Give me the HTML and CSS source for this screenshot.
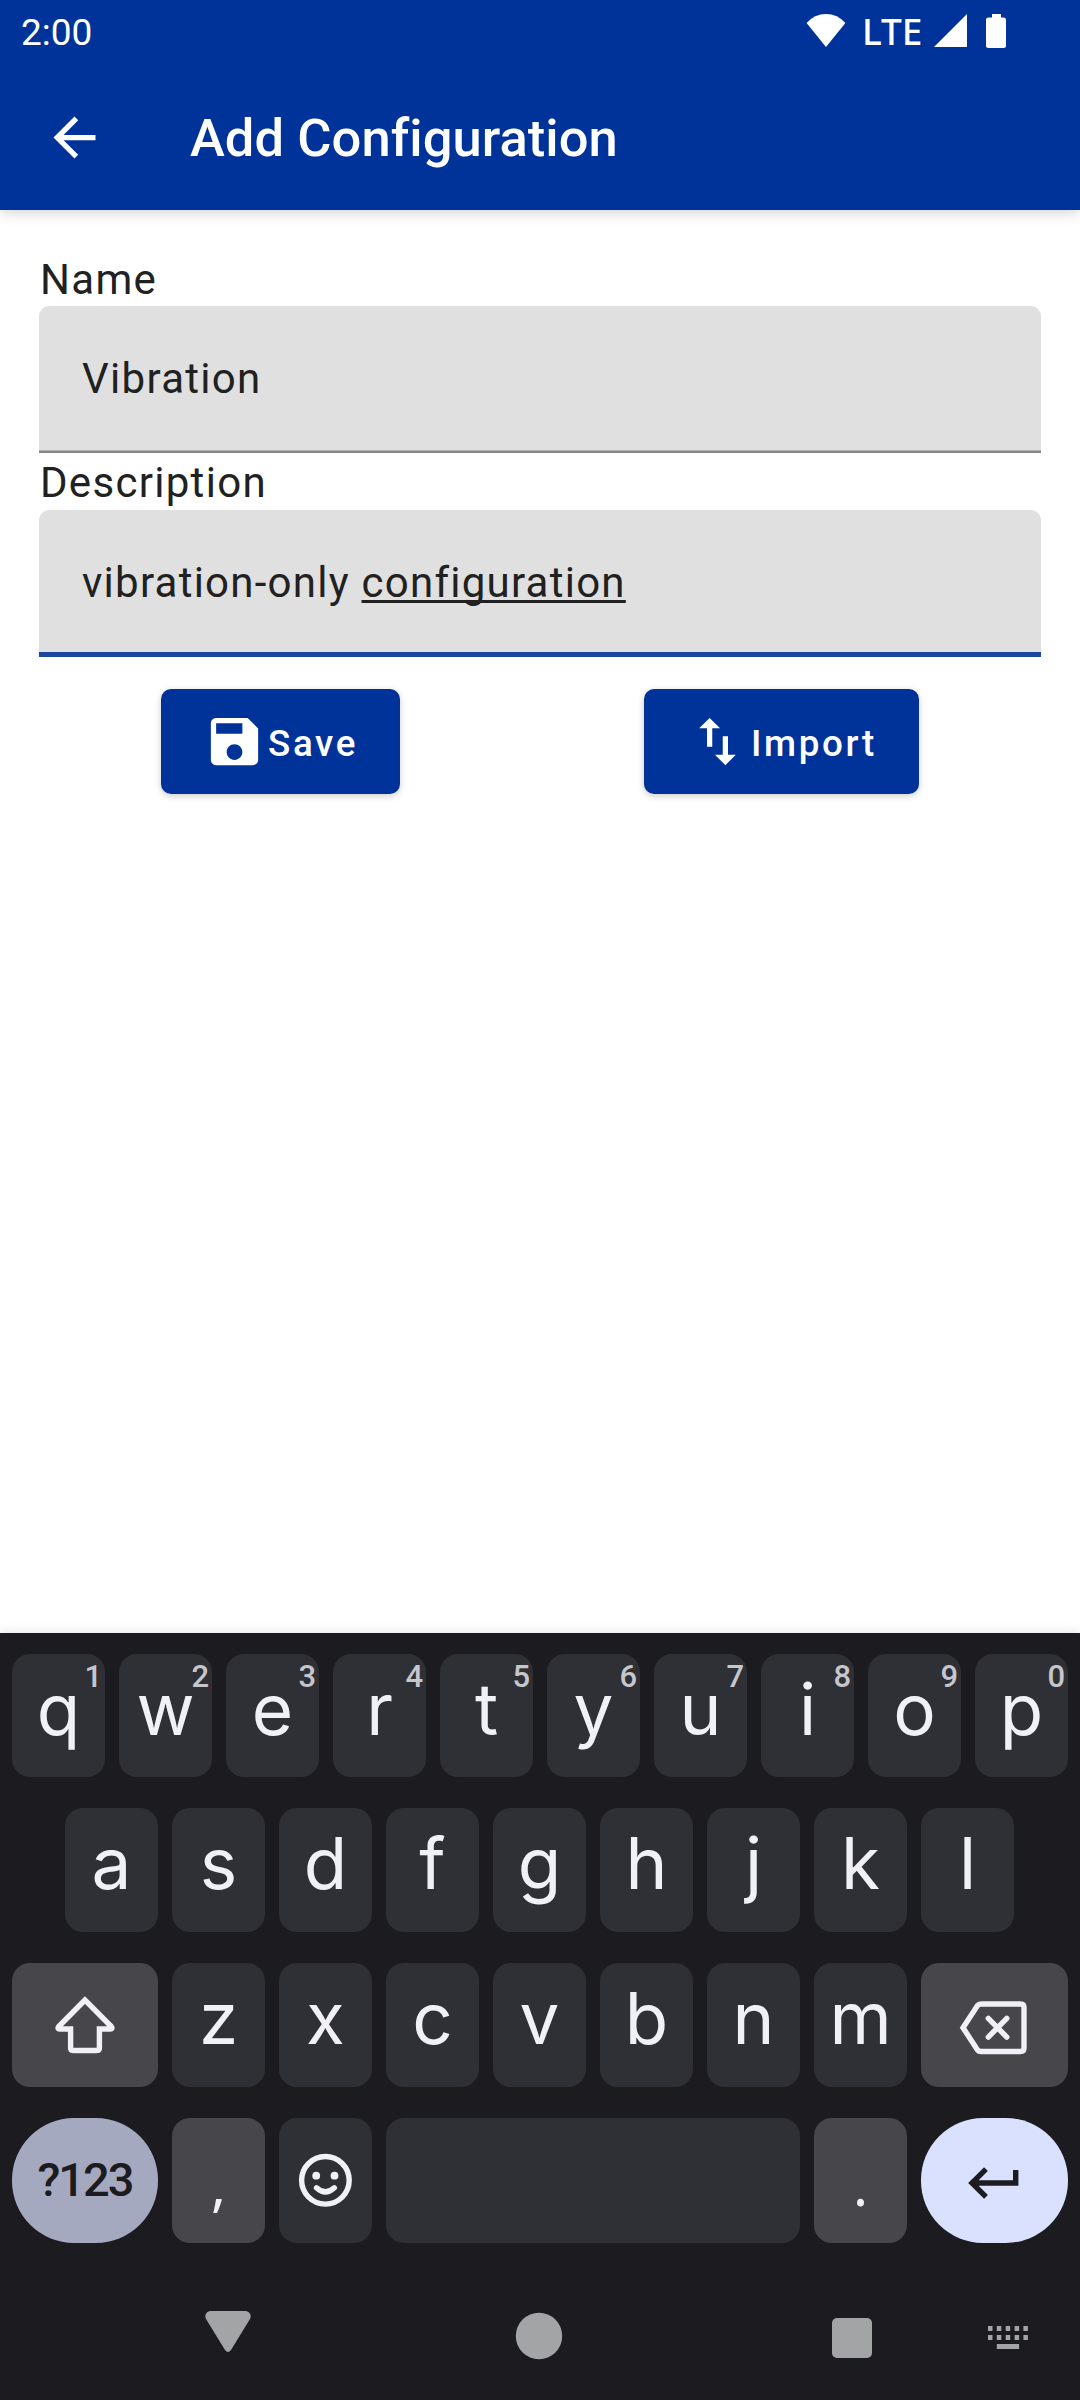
FILE: index.html
```html
<!DOCTYPE html>
<html lang="en">
<head>
<meta charset="utf-8">
<title>Add Configuration</title>
<link rel="stylesheet" href="styles.css">
</head>
<body>
<div class="screen">
  <header class="top">
    <div class="status">
      <span class="clock">2:00</span>
      <div class="indicators">
        <svg class="wifi" width="40" height="33" viewBox="0 0 40 33"><path d="M20 33 .6 9Q8.500 0 20 0T39.400 9z"/></svg>
        <span class="network">LTE</span>
        <svg class="signal" width="33" height="33" viewBox="0 0 33 33"><path d="M0 33H33V0z"/></svg>
        <svg class="battery" width="20" height="34" viewBox="0 0 20 34"><path d="M6 0h9v3.500h2.500q2.500 0 2.500 2.500v25.500q0 2.500-2.500 2.500h-15q-2.500 0-2.500-2.500v-25.500q0-2.500 2.500-2.500H6z"/></svg>
      </div>
    </div>
    <div class="appbar">
      <svg class="back" width="63" height="63" viewBox="0 0 24 24"><path d="M20 11H7.830l5.590-5.590L12 4l-8 8 8 8 1.410-1.410L7.830 13H20v-2z"/></svg>
      <h1 class="title">Add Configuration</h1>
    </div>
  </header>
  <main class="form">
    <div class="label">Name</div>
    <div class="field">Vibration</div>
    <div class="label label-next">Description</div>
    <div class="field field-focused"><span>vibration-only <span class="composing">configuration</span></span></div>
    <div class="actions">
      <div class="button save">
        <svg width="63" height="63" viewBox="0 0 24 24"><path d="M17 3H5c-1.110 0-2 .9-2 2v14c0 1.100.89 2 2 2h14c1.100 0 2-.9 2-2V7l-4-4zm-5 16c-1.660 0-3-1.340-3-3s1.340-3 3-3 3 1.340 3 3-1.340 3-3 3zm3-10H5V5h10v4z"/></svg>
        <span>Save</span>
      </div>
      <div class="button import">
        <svg width="63" height="63" viewBox="0 0 24 24"><path d="M16 17.010V10h-2v7.010h-3L15 21l4-3.990h-3zM9 3L5 6.990h3V14h2V6.990h3L9 3z"/></svg>
        <span>Import</span>
      </div>
    </div>
  </main>
  <section class="keyboard">
    <div class="row row-1">
      <div class="key">q<sup>1</sup></div><div class="key">w<sup>2</sup></div><div class="key">e<sup>3</sup></div><div class="key">r<sup>4</sup></div><div class="key">t<sup>5</sup></div><div class="key">y<sup>6</sup></div><div class="key">u<sup>7</sup></div><div class="key">i<sup>8</sup></div><div class="key">o<sup>9</sup></div><div class="key">p<sup>0</sup></div>
    </div>
    <div class="row row-2">
      <div class="key">a</div><div class="key">s</div><div class="key">d</div><div class="key">f</div><div class="key">g</div><div class="key">h</div><div class="key">j</div><div class="key">k</div><div class="key">l</div>
    </div>
    <div class="row row-3">
      <div class="key wide alt">
        <svg class="line" width="146" height="124" viewBox="0 0 146 124"><path d="M73 37 46.700 63.600Q45 66 47.700 66H58.600V85Q58.600 87.500 61 87.500H85Q87.400 87.500 87.400 85V66H98.300Q101 66 99.300 63.600z"/></svg>
      </div>
      <div class="key">z</div><div class="key">x</div><div class="key">c</div><div class="key">v</div><div class="key">b</div><div class="key">n</div><div class="key">m</div>
      <div class="key wide alt">
        <svg class="line" width="147" height="124" viewBox="0 0 147 124"><path d="M42 64.700 56.500 42.500Q57.700 41 60 41H99.500Q103 41 103 44.500V85Q103 88.500 99.500 88.500H60Q57.700 88.500 56.500 87z"/><path class="round" d="M67.300 55.300l18.500 18.800M85.800 55.300 67.300 74.100"/></svg>
      </div>
    </div>
    <div class="row row-4">
      <div class="key wide pill symbols">?123</div>
      <div class="key alt punct">,</div>
      <div class="key">
        <svg class="line" width="93" height="125" viewBox="0 0 93 125"><circle cx="46.400" cy="62.300" r="23.800"/><circle class="eye" cx="37.200" cy="57.700" r="3.900"/><circle class="eye" cx="55.500" cy="57.700" r="3.900"/><path class="round" d="M37.500 69.800Q46.400 78 55.300 69.800"/></svg>
      </div>
      <div class="key space"></div>
      <div class="key alt punct">.</div>
      <div class="key wide pill enter">
        <svg class="line" width="147" height="125" viewBox="0 0 147 125"><path d="M65 51.200 51 65 65 78.800M51 65H94.700V52"/></svg>
      </div>
    </div>
  </section>
  <nav class="navbar">
    <svg class="nav-back" width="46" height="42" viewBox="0 0 46 42"><path d="M5 0H41Q47.500 2 45 8L26 39Q23 43 20 39L1 8Q-1.500 2 5 0z"/></svg>
    <svg class="nav-home" width="48" height="48" viewBox="0 0 48 48"><circle cx="24" cy="24" r="23.200"/></svg>
    <svg class="nav-recent" width="40" height="40" viewBox="0 0 40 40"><rect width="40" height="40" rx="5"/></svg>
    <svg class="nav-ime" width="40" height="24" viewBox="0 0 40 24"><path d="M0 0h4.500v5H0zM8.800 0h4.500v5H8.800zM17.700 0h4.500v5h-4.500zM26.600 0h4.500v5h-4.500zM35.400 0h4.500v5h-4.500zM0 9h4.500v5H0zM8.800 9h4.500v5H8.800zM17.700 9h4.500v5h-4.500zM26.600 9h4.500v5h-4.500zM35.400 9h4.500v5h-4.500zM8.800 18h22.300v5H8.800z"/></svg>
  </nav>
</div>
</body>
</html>
```
FILE: styles.css
```css
* { box-sizing: border-box; }
body { margin: 0; background: #fff; font-family: Roboto, sans-serif; }
svg { display: block; flex: none; }
.screen { width: 1080px; height: 2400px; display: flex; flex-direction: column; overflow: hidden; }

.top { height: 210px; flex: none; background: #003399; color: #fff; fill: #fff; box-shadow: 0 4px 12px rgba(0,0,0,.15); }
.status { height: 66px; padding: 0 74px 0 21px; display: flex; justify-content: space-between; }
.clock { font-size: 37px; line-height: 66px; }
.indicators { display: flex; padding-top: 14px; }
.network { margin: 0 10px 0 16px; width: 62px; font: 500 37px/34px "Noto Sans", sans-serif; white-space: nowrap; }
.battery { margin-left: 19px; }
.appbar { height: 144px; display: flex; padding: 40px 0 0 43px; }
.title { margin: 0 0 0 84px; font-size: 52.5px; font-weight: 500; line-height: 65px; letter-spacing: .05px; }

.form { flex: 1; padding: 42px 39px 0; color: #212121; font-size: 42px; letter-spacing: 1.3px; }
.label { padding-left: 1px; height: 54px; line-height: 56px; }
.label-next { height: 57px; line-height: 60px; }
.field { height: 147px; line-height: 146px; padding-left: 43px; background: #e0e0e0; border-radius: 10px 10px 0 0; box-shadow: inset 0 -2.500px #868686; }
.field-focused { line-height: 145px; letter-spacing: 1.25px; box-shadow: inset 0 -5px #1b479f; }
.composing { text-decoration: underline; text-decoration-thickness: 2.500px; text-underline-offset: 3px; text-decoration-skip-ink: none; }
.actions { margin-top: 32px; display: flex; justify-content: space-around; }
.button { height: 105px; padding-left: 42px; display: flex; align-items: center; gap: 2px; border-radius: 10px; background: #003399; color: #fff; fill: #fff; font-size: 36.75px; font-weight: 500; letter-spacing: 2.65px; box-shadow: 0 2px 7px rgba(0,0,0,.2); }
.button span { padding-top: 4px; }
.save { width: 239px; }
.import { width: 275px; }

.keyboard { height: 610px; flex: none; padding: 21px 12px 0; background: #1b1b20; box-shadow: 0 0 12px rgba(0,0,0,.12); color: #f1f0f7; font-family: Inter, sans-serif; }
.row { display: flex; gap: 14px; }
.row-1 { height: 123px; line-height: 110px; }
.row-2, .row-3 { height: 124px; margin-top: 31px; line-height: 111px; }
.row-2 { padding-left: 53px; }
.row-4 { height: 125px; margin-top: 31px; }
.key { position: relative; width: 93px; height: 100%; border-radius: 18px; background: #2f3035; font-size: 71px; text-align: center; }
.key sup { position: absolute; top: 4px; right: 3px; font: 500 31px/37px Roboto, sans-serif; color: #c6c6cb; }
.wide { width: 147px; }
.wide:first-child { width: 146px; }
.alt { background: #47464b; }
.space { width: 414px; }
.pill { border-radius: 62px; }
.symbols { background: #a5a9c0; color: #1b1b20; font: 500 47px/124px Roboto, sans-serif; letter-spacing: -2px; }
.enter { background: #dae1ff; color: #1b1b20; }
.punct { font: 56px/132px "Noto Sans", sans-serif; }
.line { fill: none; stroke: currentColor; stroke-width: 5.4; }
.round { stroke-linecap: round; }
.eye { fill: currentColor; stroke: none; }

.navbar { height: 157px; flex: none; display: flex; align-items: flex-start; background: #1b1b20; fill: #a3a4a6; }
.nav-back { margin: 68px 0 0 205px; }
.nav-home { margin: 69px 0 0 264px; }
.nav-recent { margin: 75px 0 0 269px; }
.nav-ime { margin: 83px 0 0 116px; }
```
